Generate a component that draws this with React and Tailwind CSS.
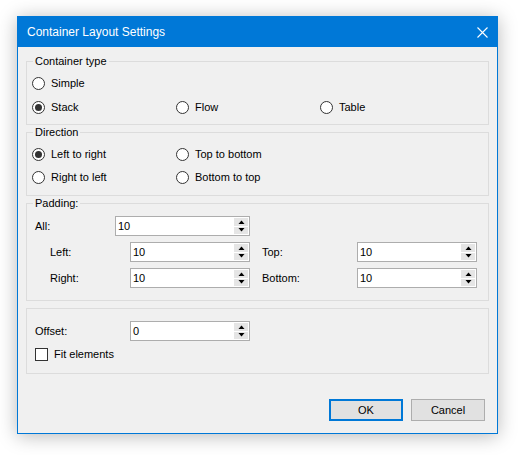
import React from "react";

function Radio({ label, checked }) {
  return (
    <label className="flex items-center gap-[6px]">
      <span className="w-[13px] h-[13px] rounded-full border border-[#333333] bg-white flex items-center justify-center">
        {checked && <span className="w-[7px] h-[7px] rounded-full bg-[#333333]"></span>}
      </span>
      <span>{label}</span>
    </label>
  );
}

function Spin({ value, width }) {
  return (
    <div className={`flex h-[20px] border border-[#adadad] bg-white ${width}`}>
      <span className="flex-1 pl-[2px] leading-[18px]">{value}</span>
      <div className="w-[15px] flex flex-col gap-[1px] py-[1px] pr-[1px]">
        <div className="flex-1 bg-[#e5e5e5] flex items-center justify-center">
          <svg width="7" height="4" viewBox="0 0 7 4">
            <path d="M0.5 4 L3.5 0.5 L6.5 4 Z" fill="#000" />
          </svg>
        </div>
        <div className="flex-1 bg-[#e5e5e5] flex items-center justify-center">
          <svg width="7" height="4" viewBox="0 0 7 4">
            <path d="M0.5 0 L3.5 3.5 L6.5 0 Z" fill="#000" />
          </svg>
        </div>
      </div>
    </div>
  );
}

function Group({ title, children, className }) {
  return (
    <fieldset className={`mx-[8px] border border-[#dcdcdc] ${className}`}>
      <legend className="ml-[6px] px-[2px] leading-[14px]">{title}</legend>
      {children}
    </fieldset>
  );
}

export default function App() {
  return (
    <div className="w-[518px] h-[455px] bg-white pt-[16px] pl-[17px] font-['Liberation_Sans',Arial,sans-serif] text-[11px] text-black">
      <div className="w-[481px] h-[418px] border border-[#0078d7] bg-[#f0f0f0] flex flex-col shadow-[0_2px_18px_rgba(0,0,0,0.28)]">
        {/* title bar */}
        <div className="h-[30px] bg-[#0078d7] flex items-center justify-between pl-[9px] pr-[9px] text-white text-[12px]">
          <span>Container Layout Settings</span>
          <svg width="11" height="11" viewBox="0 0 11 11">
            <path d="M0.5 0.5 L10.5 10.5 M10.5 0.5 L0.5 10.5" stroke="#ffffff" strokeWidth="1.1" />
          </svg>
        </div>

        <Group title="Container type" className="mt-[7px]">
          <div className="pt-[3px] pb-[5px] pl-[5px]">
            <div className="h-[24px] flex items-center">
              <Radio label="Simple" />
            </div>
            <div className="h-[24px] grid grid-cols-[144px_144px_144px] items-center">
              <Radio label="Stack" checked />
              <Radio label="Flow" />
              <Radio label="Table" />
            </div>
          </div>
        </Group>

        <Group title="Direction">
          <div className="pt-[4px] pb-[6px] pl-[5px] grid grid-cols-[144px_144px] auto-rows-[23px] items-center">
            <Radio label="Left to right" checked />
            <Radio label="Top to bottom" />
            <Radio label="Right to left" />
            <Radio label="Bottom to top" />
          </div>
        </Group>

        <Group title="Padding:">
          <div className="pt-[6px] pb-[12px] flex flex-col gap-[6px]">
            <div className="flex items-center pl-[8px]">
              <span className="w-[80px]">All:</span>
              <Spin value="10" width="w-[135px]" />
            </div>
            <div className="flex items-center pl-[23px]">
              <span className="w-[80px]">Left:</span>
              <Spin value="10" width="w-[120px]" />
              <span className="w-[95px] ml-[12px]">Top:</span>
              <Spin value="10" width="w-[120px]" />
            </div>
            <div className="flex items-center pl-[23px]">
              <span className="w-[80px]">Right:</span>
              <Spin value="10" width="w-[120px]" />
              <span className="w-[95px] ml-[12px]">Bottom:</span>
              <Spin value="10" width="w-[120px]" />
            </div>
          </div>
        </Group>

        <div className="mx-[8px] mt-[7px] border border-[#dcdcdc] pt-[12px] pb-[12px] pl-[8px] flex flex-col gap-[7px]">
          <div className="flex items-center">
            <span className="w-[95px]">Offset:</span>
            <Spin value="0" width="w-[120px]" />
          </div>
          <label className="flex items-center gap-[6px] h-[13px]">
            <span className="w-[13px] h-[13px] border border-[#333333] bg-white"></span>
            <span>Fit elements</span>
          </label>
        </div>

        <div className="mt-auto flex justify-end gap-[8px] pr-[12px] pb-[12px]">
          <button className="w-[74px] h-[22px] bg-[#e1e1e1] border-2 border-[#0078d7]">OK</button>
          <button className="w-[74px] h-[22px] bg-[#e1e1e1] border border-[#adadad]">Cancel</button>
        </div>
      </div>
    </div>
  );
}
